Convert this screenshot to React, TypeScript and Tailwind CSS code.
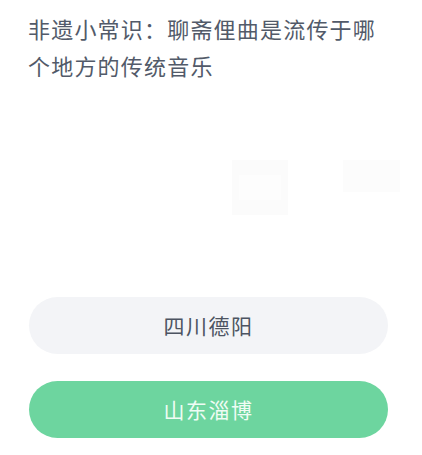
export default function App() {
  return (
    <div className="w-[422px] h-[455px] bg-white overflow-hidden" style={{ fontFamily: '"Noto Sans CJK SC", "Noto Sans", sans-serif' }}>
      <div className="pl-[28px] pt-[10px]">
        <p className="w-[360px] text-[22px] leading-[37px] tracking-[1.2px] text-[#525a69]">
          非遗小常识：聊斋俚曲是流传于哪个地方的传统音乐
        </p>
      </div>

      {/* faint leftover marks */}
      <div className="flex mt-[76px] pl-[232px] gap-[55px]">
        <div className="w-[56px] h-[55px] bg-[#fbfbfb] p-[7px]">
          <div className="w-full h-[25px] mt-[8px] bg-[#fdfdfd]" />
        </div>
        <div className="w-[57px] h-[32px] bg-[#fcfcfc]" />
      </div>

      <div className="flex flex-col gap-[27px] px-[29px] mt-[82px] w-[417px]">
        <button className="h-[57px] rounded-full bg-[#f3f4f7] text-[21px] tracking-[1.5px] text-[#4d5462]">
          四川德阳
        </button>
        <button className="h-[57px] rounded-full bg-[#6dd59f] text-[21px] tracking-[1.5px] text-[#effcf4]">
          山东淄博
        </button>
      </div>
    </div>
  );
}
